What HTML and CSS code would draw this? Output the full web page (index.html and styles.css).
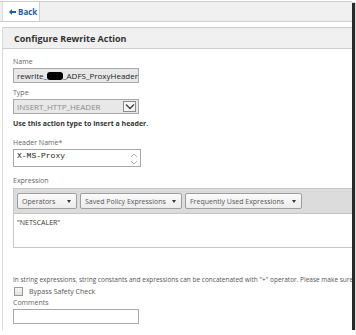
FILE: index.html
```html
<!DOCTYPE html>
<html lang="en">
<head>
    <meta charset="UTF-8">
    <title>Configure Rewrite Action</title>
    <link rel="stylesheet" href="styles.css">
</head>
<body>
    <div class="shot">
        <div class="topbar">
            <a class="back-btn" href="#">
                <svg width="7" height="6" viewBox="0 0 7 6"><path d="M0 3 L3 0 L3 2 L7 2 L7 4 L3 4 L3 6 Z" fill="#1a5fa8"/></svg>
                Back
            </a>
        </div>

        <div class="panel">
            <div class="panel-head">Configure Rewrite Action</div>
            <div class="panel-body">
                <label class="field-label">Name</label>
                <div class="input readonly">rewrite_<span class="redact"></span>_ADFS_ProxyHeader</div>

                <label class="field-label">Type</label>
                <div class="input select readonly">
                    <span class="muted">INSERT_HTTP_HEADER</span>
                    <span class="select-arrow">
                        <svg width="10" height="7" viewBox="0 0 10 7"><path d="M1 1.5 L5 5.5 L9 1.5" fill="none" stroke="#444" stroke-width="1.4"/></svg>
                    </span>
                </div>
                <p class="hint">Use this action type to insert a header.</p>

                <label class="field-label">Header Name*</label>
                <div class="input textarea">
                    <span class="mono">X-MS-Proxy</span>
                    <span class="spin">
                        <svg width="8" height="16" viewBox="0 0 8 16"><path d="M1 6 L4 3 L7 6 M1 10 L4 13 L7 10" fill="none" stroke="#b0b0b0" stroke-width="1"/></svg>
                    </span>
                </div>

                <label class="field-label">Expression</label>
                <div class="expr">
                    <div class="expr-tools">
                        <div class="dd dd-ops">Operators<span class="caret"></span></div>
                        <div class="dd dd-saved">Saved Policy Expressions<span class="caret"></span></div>
                        <div class="dd dd-freq">Frequently Used Expressions<span class="caret"></span></div>
                    </div>
                    <div class="expr-text">"NETSCALER"</div>
                </div>

                <p class="note">In string expressions, string constants and expressions can be concatenated with "+" operator. Please make sure t</p>
                <label class="check"><span class="box"></span>Bypass Safety Check</label>
                <label class="field-label">Comments</label>
                <div class="input"></div>
            </div>
        </div>
    </div>
</body>
</html>
```

FILE: styles.css
```css
/* Base */
* {
    margin: 0;
    padding: 0;
    box-sizing: border-box;
}

body {
    background: #ffffff;
    font-family: 'Open Sans', 'Liberation Sans', sans-serif;
    color: #333;
    overflow: hidden;
}

/* Capture frame with drop shadow */
.shot {
    width: 352px;
    height: 330px;
    background: #fff;
    overflow: hidden;
    box-shadow: 3px 3px 1px #2a2a2a;
    padding-top: 1px;
}

/* Top bar */
.topbar {
    height: 21px;
    background: #f0f0f0;
    border-top: 1px solid #c9ced3;
    border-bottom: 1px solid #c9ced3;
    display: flex;
}

.back-btn {
    margin-left: 2px;
    width: 38px;
    background: #fff;
    border-left: 1px solid #dcdcdc;
    border-right: 1px solid #cfcfcf;
    display: flex;
    align-items: center;
    gap: 2px;
    padding-left: 6px;
    font-size: 8px;
    font-weight: 700;
    color: #1a5fa8;
    text-decoration: none;
}

/* Panel */
.panel {
    margin-top: 5px;
    margin-left: 2px;
    border-left: 1px solid #dadada;
    height: 320px;
}

.panel-head {
    height: 22px;
    background: #f0f0f0;
    border-top: 1px solid #c9ced3;
    border-bottom: 1px solid #c9ced3;
    padding-left: 11px;
    display: flex;
    align-items: center;
    font-size: 9px;
    font-weight: 700;
    color: #333;
}

.panel-body {
    padding: 6px 0 0 10px;
    display: flex;
    flex-direction: column;
    align-items: flex-start;
}

.field-label {
    font-size: 7px;
    color: #666;
    line-height: 10px;
    margin-top: 2px;
    margin-bottom: 1px;
}

.input {
    width: 126px;
    height: 15px;
    border: 1px solid #a9a9a9;
    background: #fff;
    font-size: 8px;
    color: #222;
    display: flex;
    align-items: center;
    padding-left: 3px;
    margin-bottom: 3px;
}

.input.readonly {
    background: #e8e8e8;
}

.redact {
    display: inline-block;
    width: 20px;
    height: 8px;
    background: #000;
    border-radius: 3px;
}

.select {
    justify-content: space-between;
    padding-right: 2px;
}

.muted {
    color: #8a8a8a;
}

.select-arrow {
    width: 13px;
    height: 11px;
    border: 1px solid #8c8c8c;
    background: #f4f4f4;
    display: flex;
    align-items: center;
    justify-content: center;
}

.hint {
    font-size: 7px;
    font-weight: 700;
    color: #333;
    margin: 2px 0 8px;
}

.input.textarea {
    width: 128px;
    height: 18px;
    justify-content: space-between;
    padding-right: 2px;
    align-items: flex-start;
    padding-top: 1px;
    margin-bottom: 7px;
}

.mono {
    font-family: 'Liberation Mono', monospace;
    font-size: 8px;
}

.spin {
    display: flex;
}

/* Expression editor */
.expr {
    width: 345px;
    height: 60px;
    border: 1px solid #c8c8c8;
    border-right: none;
    margin-top: 1px;
}

.expr-tools {
    height: 25px;
    background: #dcdcdc;
    border-bottom: 1px solid #c4c4c4;
    display: flex;
    align-items: center;
    gap: 3px;
    padding-left: 3px;
}

.dd {
    height: 16px;
    background: linear-gradient(#fbfbfb, #ececec);
    border: 1px solid #9e9e9e;
    border-radius: 2px;
    font-size: 7px;
    color: #555;
    display: flex;
    align-items: center;
    justify-content: space-between;
    padding: 0 5px 0 4px;
}

.dd-ops { width: 60px; }
.dd-saved { width: 102px; }
.dd-freq { width: 117px; }

.caret {
    width: 0;
    height: 0;
    border-left: 2.5px solid transparent;
    border-right: 2.5px solid transparent;
    border-top: 3px solid #333;
}

.expr-text {
    font-size: 7px;
    color: #333;
    padding: 4px 3px;
}

.note {
    font-size: 6.5px;
    color: #555;
    white-space: nowrap;
    margin-top: 27px;
}

.check {
    display: flex;
    align-items: center;
    gap: 6px;
    font-size: 7px;
    color: #555;
    margin-top: 3px;
}

.box {
    width: 9px;
    height: 9px;
    border: 1px solid #999;
    background: linear-gradient(#f6f6f6, #e2e2e2);
    margin-left: 1px;
}
```
